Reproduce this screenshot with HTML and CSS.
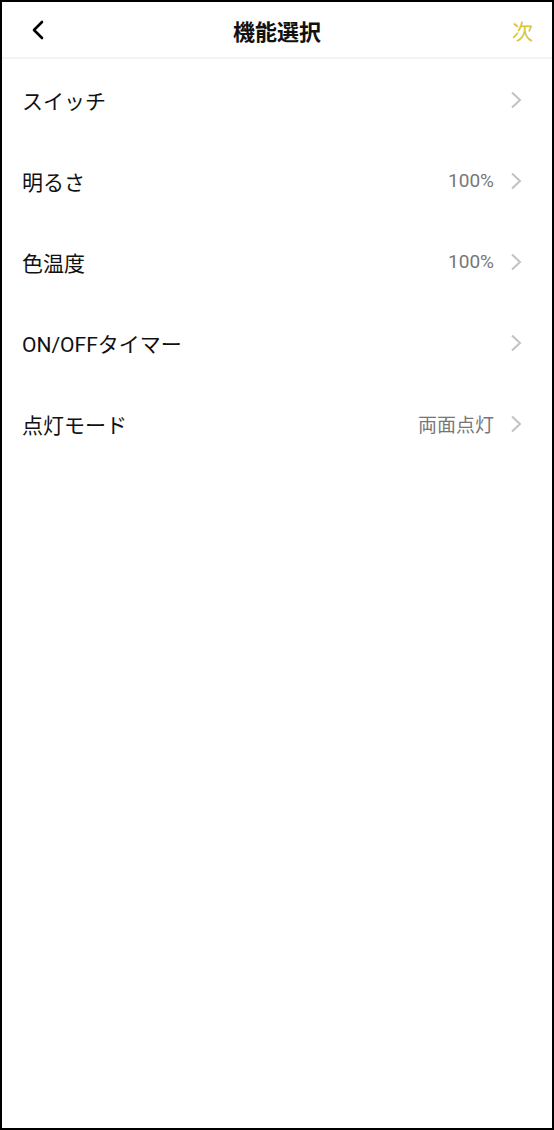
FILE: index.html
```html
<!DOCTYPE html>
<html lang="ja">

<head>
    <meta charset="UTF-8">
    <meta name="viewport" content="width=device-width, initial-scale=1.0">
    <title>機能選択</title>
    <link rel="stylesheet" href="styles.css">
</head>

<body>

    <div class="screen">
        <!-- Header -->
        <div class="header">
            <span class="back">
                <svg width="14" height="20" viewBox="0 0 14 20">
                    <path d="M11 2 L3 10 L11 18" fill="none" stroke="#000" stroke-width="2.6" stroke-linecap="round" stroke-linejoin="round"/>
                </svg>
            </span>
            <h1 class="title">機能選択</h1>
            <span class="next">次</span>
        </div>

        <!-- Function list -->
        <ul class="list">
            <li class="row">
                <span class="label">スイッチ</span>
                <span class="value"></span>
                <span class="chevron"><svg width="12" height="18" viewBox="0 0 12 18"><path d="M2 1.5 L10 9 L2 16.5" fill="none" stroke="#c2c2c2" stroke-width="2"/></svg></span>
            </li>
            <li class="row">
                <span class="label">明るさ</span>
                <span class="value">100%</span>
                <span class="chevron"><svg width="12" height="18" viewBox="0 0 12 18"><path d="M2 1.5 L10 9 L2 16.5" fill="none" stroke="#c2c2c2" stroke-width="2"/></svg></span>
            </li>
            <li class="row">
                <span class="label">色温度</span>
                <span class="value">100%</span>
                <span class="chevron"><svg width="12" height="18" viewBox="0 0 12 18"><path d="M2 1.5 L10 9 L2 16.5" fill="none" stroke="#c2c2c2" stroke-width="2"/></svg></span>
            </li>
            <li class="row">
                <span class="label">ON/OFFタイマー</span>
                <span class="value"></span>
                <span class="chevron"><svg width="12" height="18" viewBox="0 0 12 18"><path d="M2 1.5 L10 9 L2 16.5" fill="none" stroke="#c2c2c2" stroke-width="2"/></svg></span>
            </li>
            <li class="row">
                <span class="label">点灯モード</span>
                <span class="value">両面点灯</span>
                <span class="chevron"><svg width="12" height="18" viewBox="0 0 12 18"><path d="M2 1.5 L10 9 L2 16.5" fill="none" stroke="#c2c2c2" stroke-width="2"/></svg></span>
            </li>
        </ul>
    </div>

</body>

</html>
```

FILE: styles.css
```css
* {
    box-sizing: border-box;
}

html,
body {
    margin: 0;
    padding: 0;
    height: 100%;
}

body {
    font-family: Roboto, "Noto Sans CJK JP", sans-serif;
    background-color: #ffffff;
    color: #111;
}

.screen {
    height: 1130px;
    border: 2px solid #000;
    background-color: #ffffff;
}

.header {
    height: 57px;
    display: grid;
    grid-template-columns: 1fr auto 1fr;
    align-items: center;
    padding: 0 19px;
    border-bottom: 2px solid #f3f3f3;
}

.back {
    display: flex;
    padding-left: 10px;
}

.title {
    margin: 0;
    font-size: 22px;
    font-weight: bold;
    color: #111;
}

.next {
    text-align: right;
    font-size: 21px;
    color: #d6c637;
}

.list {
    list-style: none;
    margin: 0;
    padding: 0;
}

.row {
    height: 81px;
    display: flex;
    align-items: center;
    padding: 0 30px 0 20px;
}

.label {
    flex: 1;
    font-size: 21px;
    color: #111;
}

.value {
    font-size: 19px;
    color: #777;
    margin-right: 16px;
}

.chevron {
    display: flex;
}
```
